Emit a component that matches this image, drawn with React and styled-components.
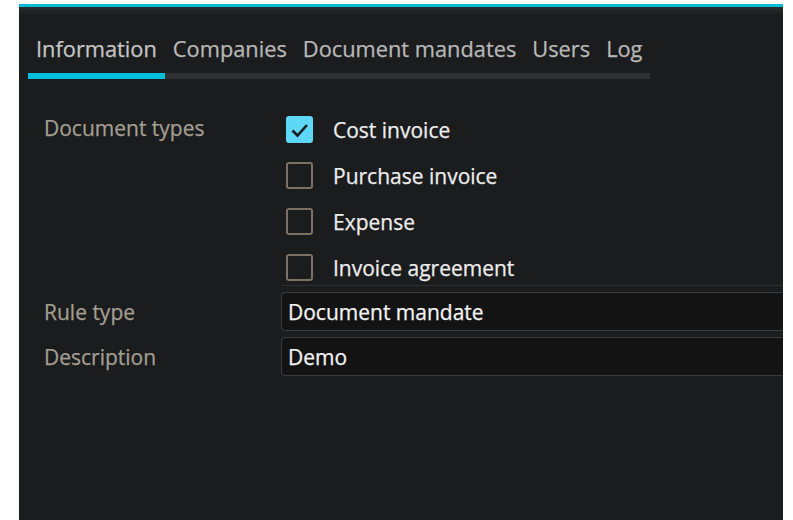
import React from "react";
import styled, { createGlobalStyle } from "styled-components";

const GlobalStyle = createGlobalStyle`
  html, body {
    margin: 0;
    padding: 0;
    background: #ffffff;
    font-family: "Open Sans", "Noto Sans", sans-serif;
  }
`;

const Page = styled.div`
  width: 793px;
  height: 520px;
  padding: 4px 10px 0 19px;
  box-sizing: border-box;
  overflow: hidden;
`;

const Panel = styled.div`
  height: 516px;
  background: linear-gradient(#2b2c2e 0px, #1b1c1e 8px) no-repeat;
  background-color: #1b1c1e;
  border-top: 3px solid #06bcd9;
  overflow: hidden;
  box-sizing: border-box;
  -webkit-text-stroke: 0.25px currentColor;
`;

const TabBar = styled.div`
  display: inline-flex;
  margin: 28px 0 0 9px;
  border-bottom: 6px solid #2f3133;
`;

const Tab = styled.div`
  position: relative;
  padding: 0 8px 10px 8px;
  font-size: 21.8px;
  line-height: 28px;
  color: ${(p) => (p.active ? "#c6c6c6" : "#b8b8b8")};
  white-space: nowrap;
  &::after {
    content: "";
    display: ${(p) => (p.active ? "block" : "none")};
    position: absolute;
    left: 0;
    right: 0;
    bottom: -6px;
    height: 6px;
    background: #06bfdc;
  }
`;

const Form = styled.div`
  display: grid;
  grid-template-columns: 237px 1fr;
  margin: 31px 0 0 25px;
  row-gap: 6px;
`;

const Label = styled.div`
  font-size: 21px;
  line-height: 28px;
  color: #a39e92;
  align-self: ${(p) => (p.top ? "start" : "center")};
  padding-top: ${(p) => (p.top ? "4px" : "0")};
`;

const CheckList = styled.div`
  display: flex;
  flex-direction: column;
  gap: 19px;
  padding: 6px 0 4px 5px;
  border-bottom: 1px solid #2e2f31;
`;

const CheckRow = styled.label`
  display: flex;
  align-items: center;
  gap: 20px;
  font-size: 21px;
  color: #ededed;
  height: 27px;
`;

const Box = styled.span`
  width: 27px;
  height: 27px;
  box-sizing: border-box;
  border-radius: 3px;
  border: 2px solid ${(p) => (p.checked ? "#5fd7f6" : "#7b7264")};
  background: ${(p) => (p.checked ? "#5fd7f6" : "transparent")};
  display: flex;
  align-items: center;
  justify-content: center;
  flex-shrink: 0;
`;

const Input = styled.div`
  height: 39px;
  box-sizing: border-box;
  border: 1px solid #3a3b3d;
  border-right: none;
  border-radius: 4px 0 0 4px;
  background: #131314;
  padding: 0 6px;
  display: flex;
  align-items: center;
  font-size: 21px;
  color: #f4f4f4;
`;

const types = [
  { name: "Cost invoice", checked: true },
  { name: "Purchase invoice" },
  { name: "Expense" },
  { name: "Invoice agreement" },
];

const tabs = ["Information", "Companies", "Document mandates", "Users", "Log"];

export default function App() {
  return (
    <Page>
      <GlobalStyle />
      <Panel>
        <TabBar>
          {tabs.map((t, i) => (
            <Tab key={t} active={i === 0}>
              {t}
            </Tab>
          ))}
        </TabBar>
        <Form>
          <Label top>Document types</Label>
          <CheckList>
            {types.map((t) => (
              <CheckRow key={t.name}>
                <Box checked={t.checked}>
                  {t.checked && (
                    <svg width="22" height="22" viewBox="0 0 22 22">
                      <path
                        d="M3.5 11.5 L8.5 16.5 L18 6"
                        fill="none"
                        stroke="#1b1c1e"
                        strokeWidth="2.6"
                      />
                    </svg>
                  )}
                </Box>
                {t.name}
              </CheckRow>
            ))}
          </CheckList>
          <Label>Rule type</Label>
          <Input>Document mandate</Input>
          <Label>Description</Label>
          <Input>Demo</Input>
        </Form>
      </Panel>
    </Page>
  );
}
